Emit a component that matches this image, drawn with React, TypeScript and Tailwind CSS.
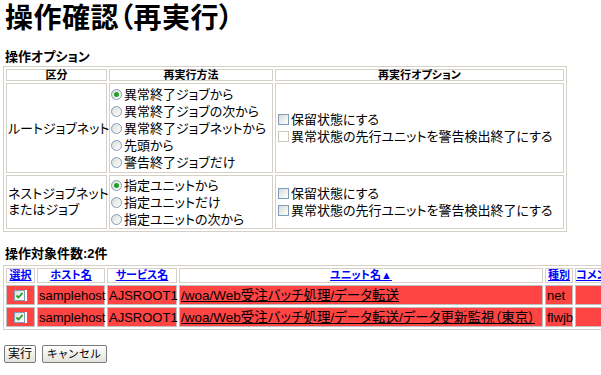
import React from 'react';

const Radio: React.FC<{ checked?: boolean }> = ({ checked = false }) => (
  <span className="inline-flex items-center justify-center w-[11px] h-[11px] rounded-full border border-[#7f9db9] bg-gradient-to-br from-[#dcdcd6] to-white mr-[2px] shrink-0">
    {checked && <span className="w-[5px] h-[5px] rounded-full bg-[#21a121]" />}
  </span>
);

const Check: React.FC<{ disabled?: boolean; checked?: boolean }> = ({ disabled = false, checked = false }) => (
  <span
    className={`inline-flex items-center justify-center w-[11px] h-[11px] border mr-[2px] shrink-0 ${
      disabled ? 'border-[#cac8bb] bg-white' : 'border-[#7f9db9] bg-gradient-to-br from-[#dcdcd6] to-white'
    }`}
  >
    {checked && (
      <svg width="9" height="9" viewBox="0 0 9 9">
        <path d="M1.5 4.5 L3.5 6.5 L7.5 2" stroke="#21a121" strokeWidth="1.8" fill="none" />
      </svg>
    )}
  </span>
);

const Line: React.FC<{ h?: string; children: React.ReactNode }> = ({ h = 'h-[17px]', children }) => (
  <div className={`flex items-center ${h} whitespace-nowrap`}>{children}</div>
);

const td1 = 'border border-[#d4d0c8] px-[1px] align-middle';

export default function App() {
  return (
    <div className="w-[601px] h-[375px] overflow-hidden bg-white text-black font-['Liberation_Sans','Noto_Sans_CJK_JP',sans-serif] [font-feature-settings:'palt'] px-[3px]">
      {/* Title */}
      <h1 className="text-[28px] font-bold leading-[32px] pt-[3px] pl-[2px] tracking-[0.5px]">操作確認（再実行）</h1>

      {/* 操作オプション */}
      <div className="text-[13px] font-bold leading-[16px] mt-[14px] pl-[2px]">操作オプション</div>
      <table className="border border-[#d4d0c8] border-separate border-spacing-[2px] w-[564px] table-fixed mt-[1px] text-[13px]">
        <colgroup>
          <col className="w-[101px]" />
          <col className="w-[164px]" />
          <col />
        </colgroup>
        <thead>
          <tr className="text-[11px] font-bold leading-[10px]">
            <th className={`${td1} h-[11px]`}>区分</th>
            <th className={td1}>再実行方法</th>
            <th className={td1}>再実行オプション</th>
          </tr>
        </thead>
        <tbody className="leading-[17px]">
          <tr className="h-[90px]">
            <td className={`${td1} whitespace-nowrap`}>ルートジョブネット</td>
            <td className={`${td1} px-0`}>
              <Line><Radio checked />異常終了ジョブから</Line>
              <Line><Radio />異常終了ジョブの次から</Line>
              <Line><Radio />異常終了ジョブネットから</Line>
              <Line><Radio />先頭から</Line>
              <Line><Radio />警告終了ジョブだけ</Line>
            </td>
            <td className={`${td1} px-[2px]`}>
              <Line><Check />保留状態にする</Line>
              <Line><Check disabled />異常状態の先行ユニットを警告検出終了にする</Line>
            </td>
          </tr>
          <tr className="h-[54px]">
            <td className={`${td1} whitespace-nowrap leading-[16px]`}>
              ネストジョブネット<br />またはジョブ
            </td>
            <td className={`${td1} px-0`}>
              <Line><Radio checked />指定ユニットから</Line>
              <Line><Radio />指定ユニットだけ</Line>
              <Line><Radio />指定ユニットの次から</Line>
            </td>
            <td className={`${td1} px-[2px]`}>
              <Line><Check />保留状態にする</Line>
              <Line><Check />異常状態の先行ユニットを警告検出終了にする</Line>
            </td>
          </tr>
        </tbody>
      </table>

      {/* 操作対象件数 */}
      <div className="text-[13px] font-bold leading-[16px] mt-[14px] pl-[2px]">操作対象件数:2件</div>
      <table className="border border-[#d4d0c8] border-separate border-spacing-[2px] w-[660px] table-fixed mt-[3px] text-[13px] whitespace-nowrap">
        <colgroup>
          <col className="w-[29px]" />
          <col className="w-[68px]" />
          <col className="w-[70px]" />
          <col className="w-[364px]" />
          <col className="w-[28px]" />
          <col />
        </colgroup>
        <thead>
          <tr className="text-[11px] font-bold leading-[11px] text-[#0000ff]">
            <th className="border border-[#d4d0c8] h-[15px]"><span className="underline">選択</span></th>
            <th className="border border-[#d4d0c8]"><span className="underline">ホスト名</span></th>
            <th className="border border-[#d4d0c8]"><span className="underline">サービス名</span></th>
            <th className="border border-[#d4d0c8]"><span className="underline">ユニット名▲</span></th>
            <th className="border border-[#d4d0c8]"><span className="underline">種別</span></th>
            <th className="border border-[#d4d0c8] text-left overflow-hidden"><span className="underline">コメン</span></th>
          </tr>
        </thead>
        <tbody className="leading-[17px]">
          {[
            { unit: '/woa/Web受注バッチ処理/データ転送', kind: 'net' },
            { unit: '/woa/Web受注バッチ処理/データ転送/データ更新監視（東京）', kind: 'flwjb' },
          ].map((r, i) => (
            <tr key={i} className="h-[20px]">
              <td className="border border-[#c0c0c0] bg-[#ff4444] text-center">
                <span className="inline-flex bg-white"><Check checked /></span>
              </td>
              <td className="border border-[#c0c0c0] bg-[#ff4444] px-[1px]">samplehost</td>
              <td className="border border-[#c0c0c0] bg-[#ff4444] px-[1px]">AJSROOT1</td>
              <td className="border border-[#c0c0c0] bg-[#ff4444] px-[1px] text-[13.5px]">
                <span className="underline">{r.unit}</span>
              </td>
              <td className="border border-[#c0c0c0] bg-[#ff4444] px-[1px]">{r.kind}</td>
              <td className="border border-[#c0c0c0] bg-[#ff4444]" />
            </tr>
          ))}
        </tbody>
      </table>

      {/* Buttons */}
      <div className="flex gap-[6px] mt-[15px] pl-[1px]">
        <button className="h-[18px] px-[3px] text-[12px] leading-[14px] border border-[#7b7b7b] rounded-[2px] bg-gradient-to-b from-white to-[#e3e3db]">実行</button>
        <button className="h-[18px] w-[65px] text-[11px] leading-[14px] tracking-[1px] border border-[#7b7b7b] rounded-[2px] bg-gradient-to-b from-white to-[#e3e3db]">キャンセル</button>
      </div>
    </div>
  );
}
